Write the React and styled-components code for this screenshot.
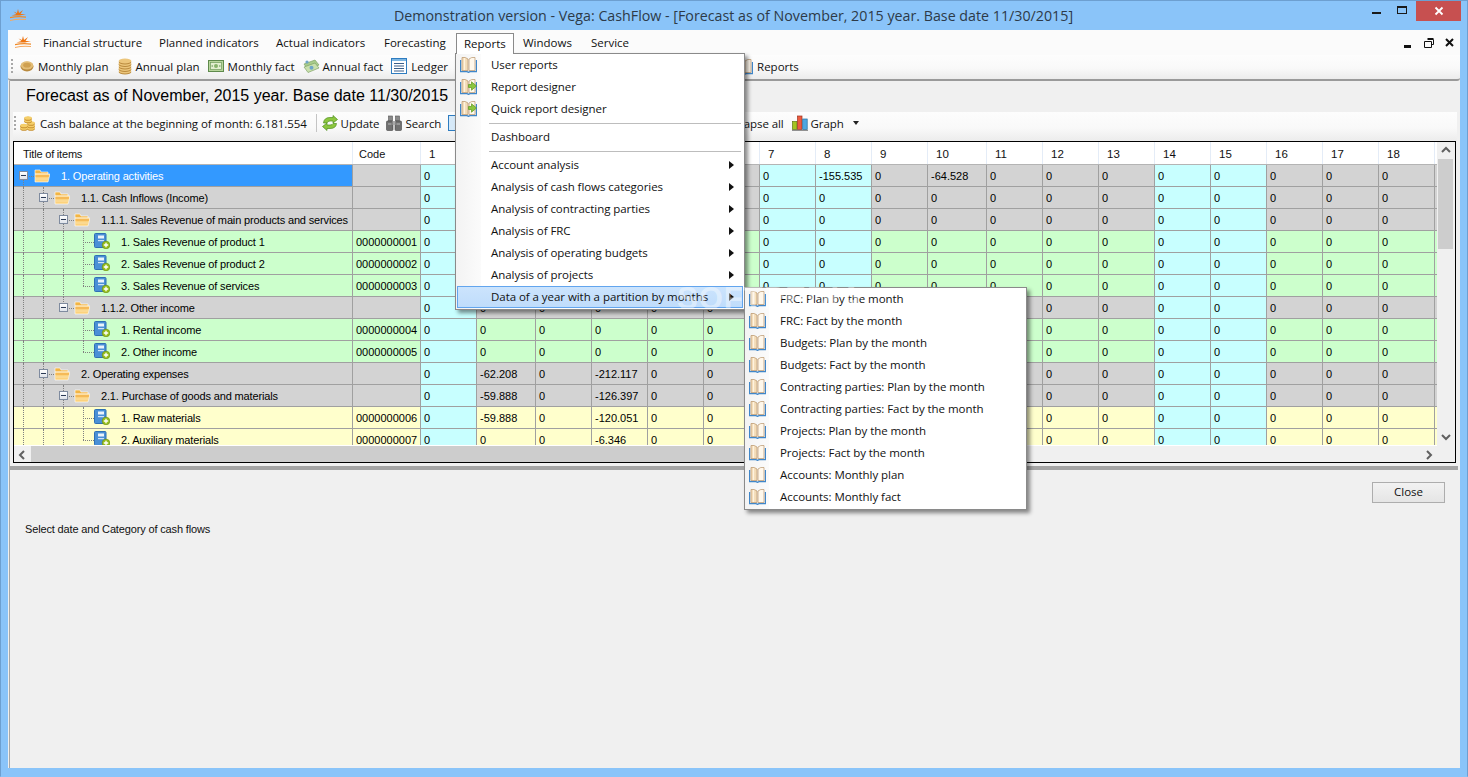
import React from "react";
import styled, { createGlobalStyle } from "styled-components";

const Global = createGlobalStyle`
  html, body { margin: 0; padding: 0; background: #8ac4f9; }
  * { box-sizing: border-box; }
`;

const UI_FONT = `"Open Sans", "Noto Sans", sans-serif`;
const GRID_FONT = `"Liberation Sans", Arial, sans-serif`;

/* ---------- icons ---------- */
const Logo = ({ size = 17 }) => (
  <svg width={size} height={size * 0.72} viewBox="0 0 17 12">
    <path d="M8 0 L9 4 L13 1 L10.5 5 L16 5 L10 6.5 L6 6.5 L1.5 6.5 L6.5 5 L3.5 2.5 L7 3.8 Z" fill="#ee7410" />
    <path d="M0 8 Q8 6 16 7.5 L16 8.7 Q8 7.5 0 9.2 Z" fill="#f08a28" />
    <path d="M0 11 Q8 9 16 10 L16 11 Q8 10 0 12 Z" fill="#f5a860" />
  </svg>
);
const FolderIcon = () => (
  <svg width="16" height="14" viewBox="0 0 16 14">
    <path d="M1 1 H6 L7 3 H14 V5 H1 Z" fill="#f2b544" stroke="#fff" strokeWidth=".6" />
    <path d="M1 5 H16 L14 13 H1 Z" fill="#fcd27c" stroke="#fff" strokeWidth=".6" />
    <path d="M1.5 7 H15" stroke="#f3b04a" strokeWidth="1.4" />
    <path d="M1.5 10 H14.5" stroke="#fbe0a6" strokeWidth="1" />
  </svg>
);
const LeafIcon = () => (
  <svg width="16" height="16" viewBox="0 0 16 16">
    <rect x="0.5" y="0.5" width="11.5" height="14" rx="1" fill="#4a90d6" stroke="#2f70b4" />
    <rect x="4" y="2.5" width="6" height="3" fill="#eaf3fb" />
    <rect x="4" y="7" width="6" height="1.2" fill="#cfe2f5" />
    <circle cx="12" cy="12" r="3.8" fill="#9ac11e" stroke="#6b8f12" strokeWidth=".7" />
    <path d="M12 9.8 V14.2 M9.8 12 H14.2" stroke="#fff" strokeWidth="1.3" />
  </svg>
);
const BookIcon = ({ arrow }) => (
  <svg width="17" height="17" viewBox="0 0 17 17">
    <path d="M.6 4 V15.6 H7 L8.5 16.4 L10 15.6 H16.4 V4" fill="none" stroke="#3f86c9" strokeWidth="1.2" />
    <path d="M2 1.5 V14.5 H8 L8 3 Q5.5 .8 2 1.5 Z" fill="#f3dcb8" stroke="#b8946a" strokeWidth=".7" />
    <path d="M15 1.5 V14.5 H9 L9 3 Q11.5 .8 15 1.5 Z" fill="#fff8ec" stroke="#b8946a" strokeWidth=".7" />
    <path d="M4.5 2 V14" stroke="#fff3df" strokeWidth="1.2" />
    {arrow && <path d="M8.5 6.5 H11.5 V3.8 L16.5 8 L11.5 12.2 V9.5 H8.5 Z" fill="#8cc63f" stroke="#5f9a1c" strokeWidth=".7" />}
  </svg>
);
const CoinIcon = () => (
  <svg width="14" height="12" viewBox="0 0 14 12">
    <ellipse cx="7" cy="6.6" rx="6.5" ry="4.8" fill="#b98a3e" />
    <ellipse cx="7" cy="5.4" rx="6.2" ry="4.2" fill="#e3bd76" />
    <ellipse cx="7" cy="5.2" rx="3.8" ry="2.4" fill="#cfa050" />
  </svg>
);
const StackIcon = () => (
  <svg width="14" height="17" viewBox="0 0 14 17">
    {[13, 10.5, 8, 5.5, 3].map((y) => (
      <g key={y}>
        <ellipse cx="7" cy={y + 1} rx="6.3" ry="2.6" fill="#b98a3e" />
        <ellipse cx="7" cy={y} rx="6.3" ry="2.4" fill="#ecc67c" />
      </g>
    ))}
  </svg>
);
const BillIcon = () => (
  <svg width="16" height="12" viewBox="0 0 16 12">
    <rect x=".5" y=".5" width="15" height="11" fill="#b8d69c" stroke="#5f8a4c" />
    <rect x="2.5" y="2.5" width="11" height="7" fill="#e2efcf" stroke="#6f9a5c" strokeWidth=".7" />
    <circle cx="8" cy="6" r="2" fill="#86b36a" />
    <path d="M3.5 6 H5 M11 6 H12.5" stroke="#5f8a4c" />
  </svg>
);
const CashIcon = () => (
  <svg width="17" height="14" viewBox="0 0 17 14">
    <path d="M1 5 L12 1 L16 6 L5 11 Z" fill="#a9cc8c" stroke="#739a5a" strokeWidth=".6" />
    <path d="M1 8 L12 4 L16 9 L5 13.5 Z" fill="#c9e0ad" stroke="#739a5a" strokeWidth=".6" />
    <circle cx="8.5" cy="8.7" r="2" fill="#6fa6c8" />
    <circle cx="4" cy="3" r="1.6" fill="#6fa6c8" />
  </svg>
);
const LedgerIcon = () => (
  <svg width="16" height="16" viewBox="0 0 16 16">
    <rect x=".5" y=".5" width="15" height="15" fill="#fff" stroke="#2e7cc0" />
    <rect x="1" y="1" width="14" height="2" fill="#7db6e2" />
    <path d="M3 5.5 H13 M3 8 H13 M3 10.5 H13 M3 13 H13" stroke="#3a5f8a" strokeWidth="1" />
  </svg>
);
const CoinsIcon = () => (
  <svg width="16" height="16" viewBox="0 0 16 16">
    {[[4, 13], [4, 10.5], [11, 13], [11, 10.5], [11, 8], [8, 5.5], [8, 3]].map(([x, y]) => (
      <g key={`${x}-${y}`}>
        <ellipse cx={x} cy={y + 0.8} rx="3.8" ry="2" fill="#c8902e" />
        <ellipse cx={x} cy={y} rx="3.8" ry="1.8" fill="#f5cf6a" />
      </g>
    ))}
  </svg>
);
const RefreshIcon = () => (
  <svg width="16" height="16" viewBox="0 0 16 16">
    <path d="M1.5 8 Q2 2.5 8 2.5 L11 2.5 L11 0.5 L15.5 4.5 L11 8 L11 6 L8 6 Q5.5 6 5 8 Z" fill="#8cc63f" stroke="#4f8f1c" strokeWidth=".7" />
    <path d="M14.5 8.5 Q14 13.5 8 13.5 L5 13.5 L5 15.5 L.5 11.5 L5 8 L5 10 L8 10 Q10.5 10 11 8.5 Z" fill="#8cc63f" stroke="#4f8f1c" strokeWidth=".7" />
  </svg>
);
const BinocularIcon = () => (
  <svg width="16" height="16" viewBox="0 0 16 16">
    <rect x="2.5" y="1" width="4" height="5" fill="#8a8a8a" stroke="#555" strokeWidth=".6" />
    <rect x="9.5" y="1" width="4" height="5" fill="#8a8a8a" stroke="#555" strokeWidth=".6" />
    <rect x=".5" y="6" width="6.5" height="9.5" rx="1" fill="#707070" stroke="#444" strokeWidth=".6" />
    <rect x="9" y="6" width="6.5" height="9.5" rx="1" fill="#707070" stroke="#444" strokeWidth=".6" />
    <rect x="6.5" y="6" width="3" height="4" fill="#a8a8a8" />
    <path d="M2 9 H5.5 M10.5 9 H14" stroke="#bbb" />
  </svg>
);
const ChartIcon = () => (
  <svg width="16" height="16" viewBox="0 0 16 16">
    <rect x=".5" y="6.5" width="4.5" height="8" fill="#a4c421" stroke="#5f7a10" strokeWidth=".7" />
    <rect x="5.5" y="1" width="4.5" height="13.5" fill="#ec5b3f" stroke="#a0321e" strokeWidth=".7" />
    <rect x="10.7" y="4" width="4.5" height="10.5" fill="#4ea6e0" stroke="#256f9f" strokeWidth=".7" />
    <path d="M0 15.3 H16" stroke="#777" />
  </svg>
);
const BlueTile = () => (
  <svg width="16" height="16" viewBox="0 0 16 16">
    <rect x=".5" y=".5" width="15" height="15" fill="#d6e9f8" stroke="#2e7cc0" />
  </svg>
);
const Chevron = ({ dir }) => {
  const d = { up: "M1 6 L5 2 L9 6", down: "M1 2 L5 6 L9 2", left: "M6 1 L2 5 L6 9", right: "M2 1 L6 5 L2 9" }[dir];
  return (
    <svg width="10" height="10" viewBox="0 0 10 10" style={{ display: "block" }}>
      <path d={d} fill="none" stroke="#606060" strokeWidth="2" />
    </svg>
  );
};

/* ---------- window frame ---------- */
const Screen = styled.div`
  width: 1468px;
  height: 777px;
  overflow: hidden;
  position: relative;
  background: #8ac4f9;
  border: 1px solid #6d9fd0;
  border-bottom-color: #8ac4f9;
  font-family: ${UI_FONT};
  display: flex;
  flex-direction: column;
`;
const TitleBar = styled.div`
  height: 29px;
  flex: none;
  display: flex;
  align-items: center;
  position: relative;
  padding-left: 9px;
`;
const TitleText = styled.div`
  position: absolute;
  left: 393px;
  top: 6px;
  font-size: 14.25px;
  line-height: 18px;
  color: #2d3a48;
  white-space: nowrap;
`;
const CaptionButtons = styled.div`
  margin-left: auto;
  display: flex;
  align-self: flex-start;
  margin-right: 6px;
`;
const CaptionBtn = styled.div`
  width: ${(p) => p.$w}px;
  height: 20px;
  display: flex;
  align-items: center;
  justify-content: center;
  background: ${(p) => p.$bg || "transparent"};
`;
const Client = styled.div`
  flex: 1;
  margin: 0 7px 8px 7px;
  background: #f0f0f0;
  display: flex;
  flex-direction: column;
  min-height: 0;
`;

/* ---------- menu bar ---------- */
const MenuBar = styled.div`
  height: 25px;
  flex: none;
  background: #fbfbfb;
  display: flex;
  align-items: center;
  padding-left: 7px;
  position: relative;
  font-size: 11.5px;
  color: #111;
`;
const LogoSlot = styled.div`
  width: 19px;
  margin-right: 0;
  display: flex;
`;
const MenuItem = styled.div`
  height: 21px;
  width: ${(p) => p.$w}px;
  margin-top: 2px;
  padding-left: ${(p) => p.$pl}px;
  line-height: 20px;
  white-space: nowrap;
  ${(p) => p.$active && `
    background: #fff;
    border: 1px solid #8a8a8a;
    border-bottom: none;
    padding-left: 7px;
    position: relative;
    z-index: 6;
  `}
`;
const MdiButtons = styled.div`
  margin-left: auto;
  display: flex;
  align-items: center;
  gap: 9px;
  margin-right: 5px;
`;

/* ---------- toolbars ---------- */
const ToolStrip = styled.div`
  flex: none;
  height: ${(p) => p.$h}px;
  display: flex;
  align-items: center;
  padding-left: ${(p) => p.$pl}px;
  padding-bottom: ${(p) => p.$pb}px;
  background: linear-gradient(#fdfdfd, #f9f9f9 55%, #ececec);
  font-size: 11.5px;
  color: #111;
  white-space: nowrap;
  ${(p) => p.$line && "border-bottom: 2px solid #9a9a9a; border-radius: 0 0 3px 3px;"}
  ${(p) => p.$inset && `margin: 0 1px 0 3px; letter-spacing: -0.1px;`}
`;
const Grip = styled.div`
  width: 2px;
  height: 15px;
  margin-right: ${(p) => p.$mr}px;
  background: repeating-linear-gradient(#a8a8a8 0 2px, transparent 2px 4px);
`;
const Tool = styled.div`
  display: flex;
  align-items: center;
  gap: ${(p) => p.$gap ?? 4}px;
  margin-right: ${(p) => p.$mr ?? 8}px;
`;
const Spacer = styled.div`
  width: ${(p) => p.$w}px;
  flex: none;
`;
const ToolSep = styled.div`
  width: 1px;
  height: 18px;
  background: #c4c4c4;
  margin: 0 5px 0 9px;
`;
const Caret = styled.div`
  width: 0;
  height: 0;
  border: 3px solid transparent;
  border-top: 4px solid #222;
  border-bottom: none;
  margin-left: 9px;
`;

/* ---------- child window ---------- */
const Child = styled.div`
  flex: 1;
  min-height: 0;
  display: flex;
  flex-direction: column;
  margin-left: 1px;
  margin-right: 2px;
  border-left: 1px solid #a8a8a8;
  background: #f0f0f0;
`;
const Heading = styled.div`
  height: 31px;
  flex: none;
  padding-left: 16px;
  font-family: ${GRID_FONT};
  font-size: 16px;
  line-height: 30px;
  color: #000;
`;

/* ---------- data grid ---------- */
const GridFrame = styled.div`
  flex: none;
  height: 322px;
  width: 1443px;
  margin-left: 3px;
  border: 1px solid #000;
  display: flex;
  flex-direction: column;
  background: #f0f0f0;
  font-family: ${GRID_FONT};
  font-size: 11px;
`;
const GridMain = styled.div`
  flex: 1;
  min-height: 0;
  display: flex;
`;
const GridTable = styled.div`
  width: 1423px;
  flex: none;
  overflow: hidden;
  border-bottom: 1px solid #fff;
`;
const TRACKS = "339px 68px 56px 59px repeat(7, 56px) 59px repeat(9, 56px)";
const HeadRow = styled.div`
  display: grid;
  grid-template-columns: ${TRACKS};
  height: 23px;
  background: #fff;
  border-bottom: 1px solid #b4b4b4;
`;
const HeadCell = styled.div`
  padding: 2px 0 0 ${(p) => p.$pl}px;
  line-height: 20px;
  color: #111;
  border-right: 1px solid #e4ecf7;
  font-size: ${(p) => p.$fs || 11}px;
  letter-spacing: ${(p) => p.$ls || 0}px;
`;
const DataRow = styled.div`
  display: grid;
  grid-template-columns: ${TRACKS};
  grid-auto-rows: 22px;
  height: 22px;
`;
const Cell = styled.div`
  background: ${(p) => p.$bg};
  color: ${(p) => p.$fg || "#000"};
  border-right: 1px solid #a0a0a0;
  border-bottom: 1px solid #a0a0a0;
  padding: 2px 0 0 3px;
  line-height: 19px;
  white-space: nowrap;
  overflow: hidden;
`;
const TreeCell = styled(Cell)`
  display: flex;
  padding: 0;
  line-height: 21px;
  align-items: center;
  overflow: visible;
  letter-spacing: -0.15px;
`;
const Tier = styled.span`
  position: relative;
  width: 20px;
  flex: none;
  align-self: stretch;
  display: flex;
  align-items: center;
  &::before {
    content: "";
    display: ${(p) => (p.$line === "none" ? "none" : "block")};
    position: absolute;
    left: 9px;
    top: ${(p) => (p.$line === "bottom" ? "50%" : "0")};
    bottom: ${(p) => (p.$line === "top" ? "50%" : "-1px")};
    border-left: 1px dotted #808080;
  }
  &::after {
    content: "";
    display: ${(p) => (p.$branch ? "block" : "none")};
    position: absolute;
    left: 9px;
    right: 0;
    top: 50%;
    border-top: 1px dotted #808080;
  }
`;
const Expander = styled.span`
  position: relative;
  z-index: 1;
  width: 9px;
  height: 9px;
  margin-left: 5px;
  border: 1px solid #7f8b9f;
  background: linear-gradient(#fff, #dfe3ea);
  display: flex;
  align-items: center;
  justify-content: center;
  &::before {
    content: "";
    width: 5px;
    height: 1px;
    background: #2b3a55;
  }
`;
const NodeIcon = styled.span`
  flex: none;
  width: 16px;
  display: flex;
  margin-right: 11px;
  margin-bottom: ${(p) => (p.$leaf ? 2 : 0)}px;
`;
const NodeText = styled.span`
  position: relative;
  top: 1px;
`;
const VScroll = styled.div`
  flex: 1;
  display: flex;
  flex-direction: column;
  align-items: stretch;
  padding: 0 2px 0 1px;
`;
const ScrollBtn = styled.div`
  flex: none;
  height: 17px;
  width: ${(p) => (p.$w ? `${p.$w}px` : "auto")};
  display: flex;
  align-items: center;
  justify-content: center;
`;
const VThumb = styled.div`
  flex: none;
  height: 90px;
  background: #cdcdcd;
`;
const Fill = styled.div`
  flex: 1;
`;
const HScroll = styled.div`
  flex: none;
  height: 16px;
  display: flex;
`;
const HThumb = styled.div`
  flex: none;
  width: 970px;
  background: #cdcdcd;
`;
const Corner = styled.div`
  flex: none;
  width: 17px;
`;

/* ---------- bottom panel ---------- */
const Splitter = styled.div`
  flex: none;
  height: 4px;
  margin-top: 3px;
  background: #a4a4a4;
`;
const BottomPanel = styled.div`
  flex: 1;
  display: flex;
  flex-direction: column;
  padding: 12px 13px 0 15px;
  font-size: 11.5px;
`;
const CloseBtn = styled.div`
  align-self: flex-end;
  width: 73px;
  height: 21px;
  border: 1px solid #adadad;
  background: linear-gradient(#f2f2f2, #e5e5e5);
  text-align: center;
  line-height: 18px;
  color: #111;
`;
const PanelNote = styled.div`
  margin-top: 18px;
  line-height: 16px;
  font-family: ${GRID_FONT};
  font-size: 11px;
  letter-spacing: -0.15px;
  color: #111;
`;

/* ---------- popup menus ---------- */
const Popup = styled.div`
  position: absolute;
  left: ${(p) => p.$x}px;
  top: ${(p) => p.$y}px;
  width: ${(p) => p.$w}px;
  padding: 0 1px 1px;
  background: linear-gradient(90deg, #f3f3f3 0, #fbfbfb ${(p) => p.$gutter}px, #fff ${(p) => p.$gutter}px);
  border: 1px solid #8a8a8a;
  box-shadow: 3px 3px 4px rgba(0, 0, 0, 0.45);
  font-size: 11.5px;
  letter-spacing: -0.05px;
  color: #111;
  z-index: 5;
`;
const PopItem = styled.div`
  height: 22px;
  display: flex;
  align-items: center;
  position: relative;
  padding: 0 0 1px 3px;
  white-space: nowrap;
  ${(p) => p.$hot && `
    background: linear-gradient(#cce4fd, #bfdcfb);
    outline: 1px solid #62a5ee;
    outline-offset: -1px;
  `}
`;
const PopIcon = styled.span`
  width: 17px;
  flex: none;
  display: flex;
`;
const PopLabel = styled.span`
  margin-left: 14px;
`;
const PopArrow = styled.span`
  position: absolute;
  right: 9px;
  top: 7px;
  border: 4px solid transparent;
  border-left: 5px solid #111;
  border-right: none;
`;
const PopSep = styled.div`
  height: 6px;
  margin-left: 32px;
  margin-right: 2px;
  display: flex;
  align-items: center;
  &::before {
    content: "";
    flex: 1;
    height: 1px;
    background: #bdbdbd;
  }
`;
const Watermark = styled.div`
  position: absolute;
  left: 676px;
  top: 280px;
  z-index: 7;
  font-family: ${GRID_FONT};
  font-size: 31px;
  font-weight: bold;
  letter-spacing: 1px;
  color: rgba(255, 255, 255, 0.42);
  pointer-events: none;
`;

/* ---------- data ---------- */
const GRAY = "#d3d3d3";
const GREEN = "#ccffcc";
const YELLOW = "#ffffcc";
const CYAN = "#c8ffff";
const WEEKEND = [1, 7, 8, 14, 15];
const DAYS = Array.from({ length: 18 }, (_, i) => i + 1);

const ROWS = [
  { t: "1. Operating activities", lv: 0, bg: GRAY, folder: true, trunk: [], own: "bottom", sel: true, vals: { 8: "-155.535", 10: "-64.528" } },
  { t: "1.1. Cash Inflows (Income)", lv: 1, bg: GRAY, folder: true, trunk: [1] },
  { t: "1.1.1. Sales Revenue of main products and services", lv: 2, bg: GRAY, folder: true, trunk: [1, 1] },
  { t: "1. Sales Revenue of product 1", code: "0000000001", lv: 3, bg: GREEN, trunk: [1, 1, 1] },
  { t: "2. Sales Revenue of product 2", code: "0000000002", lv: 3, bg: GREEN, trunk: [1, 1, 1] },
  { t: "3. Sales Revenue of services", code: "0000000003", lv: 3, bg: GREEN, trunk: [1, 1, 1], own: "top" },
  { t: "1.1.2. Other income", lv: 2, bg: GRAY, folder: true, trunk: [1, 1], own: "top" },
  { t: "1. Rental income", code: "0000000004", lv: 3, bg: GREEN, trunk: [1, 1, 0] },
  { t: "2. Other income", code: "0000000005", lv: 3, bg: GREEN, trunk: [1, 1, 0], own: "top" },
  { t: "2. Operating expenses", lv: 1, bg: GRAY, folder: true, trunk: [1], vals: { 2: "-62.208", 4: "-212.117" } },
  { t: "2.1. Purchase of goods and materials", lv: 2, bg: GRAY, folder: true, trunk: [1, 1], vals: { 2: "-59.888", 4: "-126.397" } },
  { t: "1. Raw materials", code: "0000000006", lv: 3, bg: YELLOW, trunk: [1, 1, 1], vals: { 2: "-59.888", 4: "-120.051" } },
  { t: "2. Auxiliary materials", code: "0000000007", lv: 3, bg: YELLOW, trunk: [1, 1, 1], own: "top", vals: { 4: "-6.346" } },
];

const TOP_MENU = [
  { t: "User reports", icon: "book" },
  { t: "Report designer", icon: "arrow" },
  { t: "Quick report designer", icon: "arrow" },
  { sep: true },
  { t: "Dashboard" },
  { sep: true },
  { t: "Account analysis", more: true },
  { t: "Analysis of cash flows categories", more: true },
  { t: "Analysis of contracting parties", more: true },
  { t: "Analysis of FRC", more: true },
  { t: "Analysis of operating budgets", more: true },
  { t: "Analysis of projects", more: true },
  { t: "Data of a year with a partition by months", more: true, hot: true },
];
const SUB_MENU = [
  "FRC: Plan by the month",
  "FRC: Fact by the month",
  "Budgets: Plan by the month",
  "Budgets: Fact by the month",
  "Contracting parties: Plan by the month",
  "Contracting parties: Fact by the month",
  "Projects: Plan by the month",
  "Projects: Fact by the month",
  "Accounts: Monthly plan",
  "Accounts: Monthly fact",
];

function TreeRow({ row }) {
  const own = row.own || "full";
  return (
    <DataRow>
      <TreeCell $bg={row.sel ? "#3399ff" : row.bg} $fg={row.sel ? "#fff" : "#000"}>
        {row.trunk.map((on, i) => (
          <Tier key={i} $line={on ? "full" : "none"} />
        ))}
        <Tier $line={own} $branch>
          {row.folder && <Expander />}
        </Tier>
        <NodeIcon $leaf={!row.folder}>{row.folder ? <FolderIcon /> : <LeafIcon />}</NodeIcon>
        <NodeText>{row.t}</NodeText>
      </TreeCell>
      <Cell $bg={row.bg}>{row.code}</Cell>
      {DAYS.map((d) => (
        <Cell key={d} $bg={WEEKEND.includes(d) ? CYAN : row.bg}>
          {(row.vals && row.vals[d]) || "0"}
        </Cell>
      ))}
      <Cell $bg={row.bg} />
    </DataRow>
  );
}

function App() {
  return (
    <Screen>
      <Global />
      <TitleBar>
        <Logo />
        <TitleText>Demonstration version - Vega: CashFlow - [Forecast as of November, 2015 year. Base date 11/30/2015]</TitleText>
        <CaptionButtons>
          <CaptionBtn $w={26}>
            <svg width="9" height="5"><rect width="9" height="2" y="3" fill="#1a1a1a" /></svg>
          </CaptionBtn>
          <CaptionBtn $w={27}>
            <svg width="11" height="10"><rect x=".5" y=".5" width="9" height="7" fill="none" stroke="#1a1a1a" /><rect width="10" height="2" fill="#1a1a1a" /></svg>
          </CaptionBtn>
          <CaptionBtn $w={45} $bg="#c75050">
            <svg width="10" height="10"><path d="M1.5 1.5 L8.5 8.5 M8.5 1.5 L1.5 8.5" stroke="#fff" strokeWidth="1.8" /></svg>
          </CaptionBtn>
        </CaptionButtons>
      </TitleBar>

      <Client>
        <MenuBar>
          <LogoSlot><Logo /></LogoSlot>
          <MenuItem $w={125} $pl={9}>Financial structure</MenuItem>
          <MenuItem $w={117}>Planned indicators</MenuItem>
          <MenuItem $w={108}>Actual indicators</MenuItem>
          <MenuItem $w={72}>Forecasting</MenuItem>
          <MenuItem $w={58} $active>Reports</MenuItem>
          <MenuItem $w={77} $pl={9}>Windows</MenuItem>
          <MenuItem $w={60}>Service</MenuItem>
          <MdiButtons>
            <svg width="11" height="12"><rect y="8" width="7" height="3" fill="#111" /></svg>
            <svg width="11" height="11"><path d="M3.5 2.5 H9.5 V7.5 H7.5 M.5 4.5 H7.5 V10.5 H.5 Z M3.5 1.5 H9.5" fill="none" stroke="#111" /></svg>
            <svg width="11" height="11"><path d="M2 2 L9 9 M9 2 L2 9" stroke="#111" strokeWidth="2" /></svg>
          </MdiButtons>
        </MenuBar>

        <ToolStrip $h={26} $pl={3} $pb={2} $line>
          <Grip $mr={7} />
          <Tool $gap={4} $mr={9}><CoinIcon />Monthly plan</Tool>
          <Tool $gap={4} $mr={8}><StackIcon />Annual plan</Tool>
          <Tool $gap={4} $mr={8}><BillIcon />Monthly fact</Tool>
          <Tool $gap={3} $mr={8}><CashIcon />Annual fact</Tool>
          <Tool $gap={4} $mr={8}><LedgerIcon />Ledger</Tool>
          <Spacer $w={280} />
          <Tool $gap={4}><BookIcon />Reports</Tool>
        </ToolStrip>

        <Child>
          <Heading>Forecast as of November, 2015 year. Base date 11/30/2015</Heading>
          <ToolStrip $h={29} $pl={1} $pb={7} $inset>
            <Grip $mr={4} />
            <Tool $gap={4} $mr={0}><CoinsIcon />Cash balance at the beginning of month: 6.181.554</Tool>
            <ToolSep />
            <Tool $gap={3} $mr={7}><RefreshIcon />Update</Tool>
            <Tool $gap={3} $mr={7}><BinocularIcon />Search</Tool>
            <Tool $gap={0} $mr={0}><BlueTile /></Tool>
            <Spacer $w={260} />
            <Tool $gap={0}>Collapse all</Tool>
            <Tool $gap={3} $mr={0}><ChartIcon />Graph</Tool>
            <Caret />
          </ToolStrip>

          <GridFrame>
            <GridMain>
              <GridTable>
                <HeadRow>
                  <HeadCell $pl={9} $ls={-0.2}>Title of items</HeadCell>
                  <HeadCell $pl={6}>Code</HeadCell>
                  {DAYS.map((d) => (
                    <HeadCell key={d} $pl={8} $fs={11.5}>{d}</HeadCell>
                  ))}
                </HeadRow>
                {ROWS.map((r) => (
                  <TreeRow key={r.t + r.lv + (r.code || "")} row={r} />
                ))}
              </GridTable>
              <VScroll>
                <ScrollBtn><Chevron dir="up" /></ScrollBtn>
                <VThumb />
                <Fill />
                <ScrollBtn><Chevron dir="down" /></ScrollBtn>
              </VScroll>
            </GridMain>
            <HScroll>
              <ScrollBtn $w={17}><Chevron dir="left" /></ScrollBtn>
              <HThumb />
              <Fill />
              <ScrollBtn $w={17}><Chevron dir="right" /></ScrollBtn>
              <Corner />
            </HScroll>
          </GridFrame>

          <Splitter />
          <BottomPanel>
            <CloseBtn>Close</CloseBtn>
            <PanelNote>Select date and Category of cash flows</PanelNote>
          </BottomPanel>
        </Child>
      </Client>

      <Popup $x={454} $y={52} $w={290} $gutter={25}>
        {TOP_MENU.map((m, i) =>
          m.sep ? (
            <PopSep key={i} />
          ) : (
            <PopItem key={m.t} $hot={m.hot}>
              <PopIcon>{m.icon && <BookIcon arrow={m.icon === "arrow"} />}</PopIcon>
              <PopLabel>{m.t}</PopLabel>
              {m.more && <PopArrow />}
            </PopItem>
          )
        )}
      </Popup>
      <Popup $x={743} $y={286} $w={283} $gutter={24}>
        {SUB_MENU.map((t) => (
          <PopItem key={t}>
            <PopIcon><BookIcon /></PopIcon>
            <PopLabel>{t}</PopLabel>
          </PopItem>
        ))}
      </Popup>
      <Watermark>SOFTPEDIA</Watermark>
    </Screen>
  );
}

export default App;
